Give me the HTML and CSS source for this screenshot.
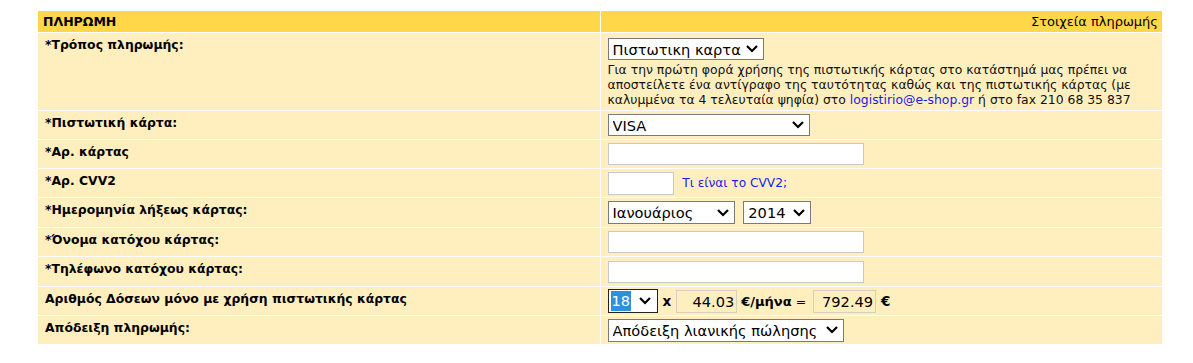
FILE: index.html
```html
<!DOCTYPE html>
<html lang="el">
<head>
	<meta charset="UTF-8">
	<title>Πληρωμή</title>
	<link rel="stylesheet" href="styles.css">
</head>
<body>
	<table class="pay">
		<tr class="head">
			<th class="lbl">ΠΛΗΡΩΜΗ</th>
			<th class="info">Στοιχεία πληρωμής</th>
		</tr>
		<tr class="tall">
			<td class="lbl">*Τρόπος πληρωμής:</td>
			<td class="fld top">
				<span class="sel w-method">
					<select><option>Πιστωτικη καρτα</option></select>
					<svg class="chev" width="14" height="9" viewBox="0 0 14 9"><polyline points="2,2 7,7 12,2"/></svg>
				</span>
				<p class="note">Για την πρώτη φορά χρήσης της πιστωτικής κάρτας στο κατάστημά μας πρέπει να αποστείλετε ένα αντίγραφο της ταυτότητας καθώς και της πιστωτικής κάρτας (με καλυμμένα τα 4 τελευταία ψηφία) στο <a href="#">logistirio@e-shop.gr</a> ή στο fax 210 68 35 837</p>
			</td>
		</tr>
		<tr>
			<td class="lbl">*Πιστωτική κάρτα:</td>
			<td class="fld">
				<span class="sel w-card">
					<select><option>VISA</option></select>
					<svg class="chev" width="14" height="9" viewBox="0 0 14 9"><polyline points="2,2 7,7 12,2"/></svg>
				</span>
			</td>
		</tr>
		<tr>
			<td class="lbl">*Αρ. κάρτας</td>
			<td class="fld"><input class="txt w-num" type="text"></td>
		</tr>
		<tr>
			<td class="lbl">*Αρ. CVV2</td>
			<td class="fld"><input class="txt w-cvv" type="text"> <a class="help" href="#">Τι είναι το CVV2;</a></td>
		</tr>
		<tr class="r29">
			<td class="lbl">*Ημερομηνία λήξεως κάρτας:</td>
			<td class="fld">
				<span class="sel w-month">
					<select><option>Ιανουάριος</option></select>
					<svg class="chev" width="14" height="9" viewBox="0 0 14 9"><polyline points="2,2 7,7 12,2"/></svg>
				</span>
				<span class="sel w-year">
					<select><option>2014</option></select>
					<svg class="chev" width="14" height="9" viewBox="0 0 14 9"><polyline points="2,2 7,7 12,2"/></svg>
				</span>
			</td>
		</tr>
		<tr>
			<td class="lbl">*Όνομα κατόχου κάρτας:</td>
			<td class="fld"><input class="txt w-num" type="text"></td>
		</tr>
		<tr class="r29">
			<td class="lbl">*Τηλέφωνο κατόχου κάρτας:</td>
			<td class="fld"><input class="txt w-num" type="text"></td>
		</tr>
		<tr>
			<td class="lbl">Αριθμός Δόσεων μόνο με χρήση πιστωτικής κάρτας</td>
			<td class="fld">
				<div class="doses">
					<span class="sel-fake">
						<span class="picked">18</span>
						<svg class="chev" width="14" height="9" viewBox="0 0 14 9"><polyline points="2,2 7,7 12,2"/></svg>
					</span>
					<b class="op">x</b>
					<input class="amount w-rate" type="text" value="44.03" readonly>
					<b class="op per">€/μήνα</b>
					<span class="eq">=</span>
					<input class="amount w-total" type="text" value="792.49" readonly>
					<b class="op">€</b>
				</div>
			</td>
		</tr>
		<tr>
			<td class="lbl">Απόδειξη πληρωμής:</td>
			<td class="fld">
				<span class="sel w-receipt">
					<select><option>Απόδειξη λιανικής πώλησης</option></select>
					<svg class="chev" width="14" height="9" viewBox="0 0 14 9"><polyline points="2,2 7,7 12,2"/></svg>
				</span>
			</td>
		</tr>
	</table>
</body>
</html>
```
FILE: styles.css
```css
*{
	margin: 0;
	padding: 0;
	box-sizing: border-box;
}
body{
	background: #fff;
	font-family: "DejaVu Sans", Verdana, sans-serif;
	color: #000;
}
.pay{
	width: 1126px;
	margin: 10px 0 0 37px;
	border-spacing: 1px;
	table-layout: fixed;
}
.pay tr{
	height: 28px;
}
.pay tr.r29{
	height: 29px;
}
.pay tr.tall{
	height: 77px;
}
.pay tr.head{
	height: 21px;
}
.head th{
	background: #ffd748;
	vertical-align: middle;
}
.head .lbl{
	text-align: left;
	padding: 0 5px;
	font-size: 12.5px;
	font-weight: bold;
}
.head .info{
	text-align: right;
	padding: 0 4px;
	font-size: 13px;
	font-weight: normal;
}
.pay td{
	background: #ffefbf;
}
td.lbl{
	vertical-align: top;
	padding: 5px 5px 0 7px;
	font-size: 12.4px;
	font-weight: bold;
	line-height: 14px;
}
td.fld{
	vertical-align: middle;
	padding: 0 7px;
	font-size: 12px;
}
td.fld.top{
	vertical-align: top;
	padding-top: 5px;
}
.note{
	width: 533px;
	margin-top: 2px;
	font-size: 12.4px;
	line-height: 15px;
	color: #111;
}
.note a, .help{
	color: #1a1aee;
	text-decoration: none;
}
.help{
	margin-left: 5px;
	font-size: 12.2px;
	vertical-align: middle;
}
.sel{
	display: inline-block;
	position: relative;
	vertical-align: middle;
	height: 23px;
}
.sel select{
	-webkit-appearance: none;
	appearance: none;
	width: 100%;
	height: 100%;
	border: 1px solid #7a7a7a;
	border-radius: 0;
	background: #fff;
	font-family: "DejaVu Sans", Verdana, sans-serif;
	font-size: 14.6px;
	color: #000;
	padding: 0 22px 0 4px;
}
.chev{
	position: absolute;
	right: 5px;
	top: 50%;
	margin-top: -5px;
	pointer-events: none;
}
.chev polyline{
	fill: none;
	stroke: #000;
	stroke-width: 2.2;
}
.w-method{ width: 156px; height: 22px; }
.w-card{ width: 202px; height: 22px; }
.w-month{ width: 127px; }
.w-year{ width: 68px; margin-left: 5px; }
.w-receipt{ width: 236px; }
.txt{
	height: 22px;
	border: 1px solid #c9c9c9;
	background: #fff;
	vertical-align: middle;
	font-size: 13px;
}
.w-num{ width: 256px; }
.w-cvv{ width: 66px; height: 23px; }
.doses{
	display: flex;
	align-items: center;
	gap: 5px;
}
.sel-fake{
	position: relative;
	display: flex;
	align-items: center;
	width: 50px;
	height: 24px;
	border: 1px solid #222;
	background: #fff;
	padding-left: 2px;
}
.picked{
	background: #2e90db;
	color: #fff;
	font-size: 14.6px;
	line-height: 20px;
	padding: 0 1px;
}
.op{
	font-size: 13.5px;
	font-weight: bold;
}
.op.per{
	font-size: 13px;
	margin-left: -1px;
}
.eq{
	font-size: 12.5px;
	margin: 0 2px 0 -1px;
}
.amount{
	height: 23px;
	border: 1px solid #d5d0c0;
	background: #ffefbf;
	text-align: right;
	font-family: "DejaVu Sans", Verdana, sans-serif;
	font-size: 14.6px;
	padding: 0 2px;
	color: #000;
}
.w-rate{ width: 61px; }
.w-total{ width: 63px; }
```
